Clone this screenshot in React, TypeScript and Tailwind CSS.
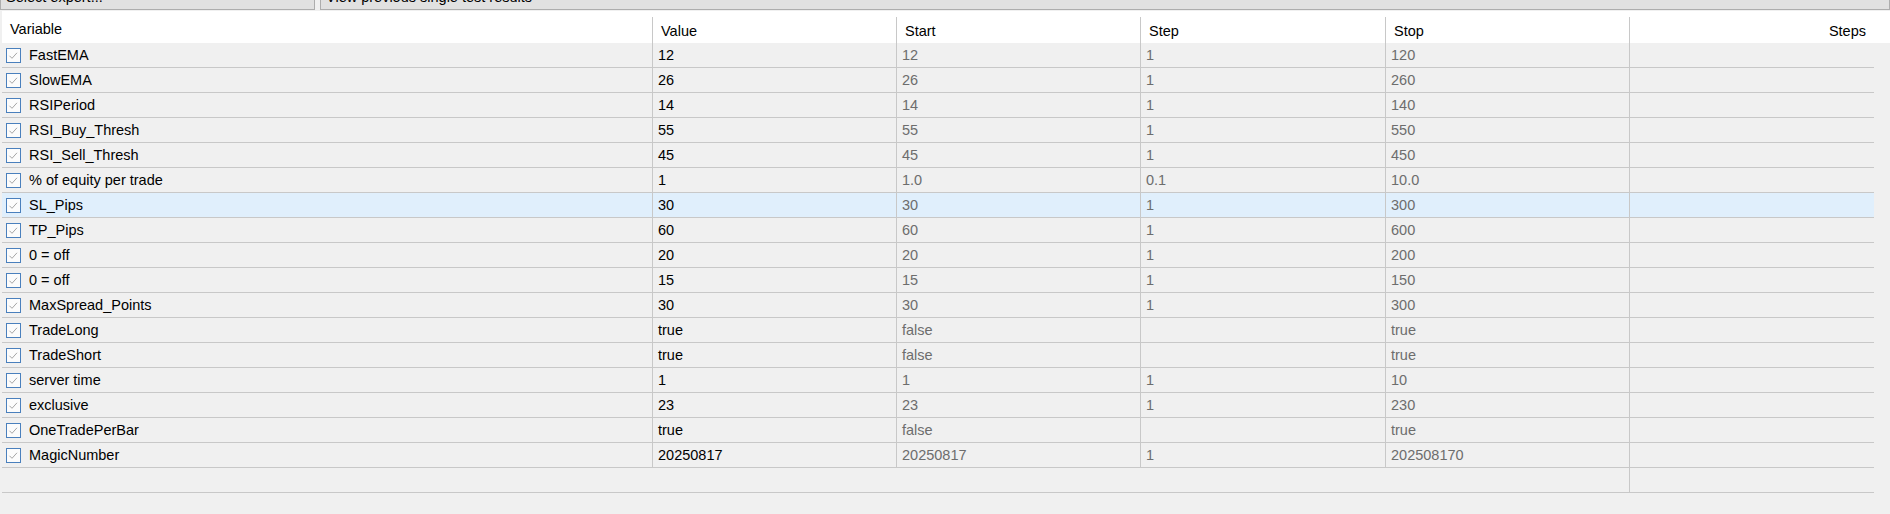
import { ChevronDown } from "lucide-react";

type InputRow = {
  readonly name: string;
  readonly value: string;
  readonly start: string;
  readonly step: string;
  readonly stop: string;
};

const inputs: ReadonlyArray<InputRow> = [
  { name: "FastEMA", value: "12", start: "12", step: "1", stop: "120" },
  { name: "SlowEMA", value: "26", start: "26", step: "1", stop: "260" },
  { name: "RSIPeriod", value: "14", start: "14", step: "1", stop: "140" },
  { name: "RSI_Buy_Thresh", value: "55", start: "55", step: "1", stop: "550" },
  { name: "RSI_Sell_Thresh", value: "45", start: "45", step: "1", stop: "450" },
  { name: "% of equity per trade", value: "1", start: "1.0", step: "0.1", stop: "10.0" },
  { name: "SL_Pips", value: "30", start: "30", step: "1", stop: "300" },
  { name: "TP_Pips", value: "60", start: "60", step: "1", stop: "600" },
  { name: "0 = off", value: "20", start: "20", step: "1", stop: "200" },
  { name: "0 = off", value: "15", start: "15", step: "1", stop: "150" },
  { name: "MaxSpread_Points", value: "30", start: "30", step: "1", stop: "300" },
  { name: "TradeLong", value: "true", start: "false", step: "", stop: "true" },
  { name: "TradeShort", value: "true", start: "false", step: "", stop: "true" },
  { name: "server time", value: "1", start: "1", step: "1", stop: "10" },
  { name: "exclusive", value: "23", start: "23", step: "1", stop: "230" },
  { name: "OneTradePerBar", value: "true", start: "false", step: "", stop: "true" },
  { name: "MagicNumber", value: "20250817", start: "20250817", step: "1", stop: "202508170" },
];

const selectedIndex = 6;

export default function App() {
  return (
    <div className="h-[514px] w-[1890px] overflow-hidden bg-[#f0f0f0] font-['Liberation_Sans',Arial,sans-serif] text-[14.5px] text-black">
      {/* combo boxes, scrolled mostly out of view */}
      <div className="flex h-[10px] items-end gap-[5px] overflow-hidden">
        <Dropdown className="w-[315px]" label="Select expert..." />
        <Dropdown className="flex-1" label="View previous single test results" />
      </div>

      <div className="ml-[2px] mt-[1px] flex h-[32px] bg-white">
        <div className="flex w-[650px] items-center pl-[8px] pt-[5px]">Variable</div>
        <HeaderCell label="Value" width="w-[244px]" />
        <HeaderCell label="Start" width="w-[244px]" />
        <HeaderCell label="Step" width="w-[245px]" />
        <HeaderCell label="Stop" width="w-[244px]" />
        <div className="flex-1 pt-[6px]">
          <div className="flex h-[26px] items-center justify-end border-l border-[#c8c8c8] pr-[24px] pt-[4px]">
            Steps
          </div>
        </div>
      </div>

      <div className="ml-[2px] w-[1872px]">
        {inputs.map((row, index) => (
          <div
            className={`flex h-[25px] border-b border-[#c8c8c8] ${index === selectedIndex ? "bg-[#e0effc]" : ""}`}
            key={`${row.name}-${index}`}
          >
            <div className="flex w-[650px] items-center gap-[8px] pl-[4px]">
              <Checkbox />
              <span className="pt-[2px]">{row.name}</span>
            </div>
            <ValueCell text={row.value} width="w-[244px]" />
            <ValueCell muted text={row.start} width="w-[244px]" />
            <ValueCell muted text={row.step} width="w-[245px]" />
            <ValueCell muted text={row.stop} width="w-[244px]" />
            <div className="flex-1 border-l border-[#c8c8c8]" />
          </div>
        ))}

        <div className="flex h-[25px] border-b border-[#c8c8c8]">
          <div className="w-[1627px]" />
          <div className="flex-1 border-l border-[#c8c8c8]" />
        </div>
      </div>
    </div>
  );
}

function Dropdown({ label, className }: { readonly label: string; readonly className: string }) {
  return (
    <div
      className={`flex h-[24px] shrink-0 items-center justify-between border border-[#adadad] bg-[#e1e1e1] pl-[5px] pr-[4px] ${className}`}
    >
      <span className="whitespace-nowrap">{label}</span>
      <ChevronDown className="h-[12px] w-[12px] text-[#606060]" strokeWidth={1.5} />
    </div>
  );
}

function HeaderCell({ label, width }: { readonly label: string; readonly width: string }) {
  return (
    <div className={`${width} pt-[6px]`}>
      <div className="flex h-[26px] items-center border-l border-[#c8c8c8] pl-[8px] pt-[4px]">{label}</div>
    </div>
  );
}

function ValueCell({
  text,
  width,
  muted = false,
}: {
  readonly text: string;
  readonly width: string;
  readonly muted?: boolean;
}) {
  return (
    <div
      className={`flex ${width} items-center border-l border-[#c8c8c8] pl-[5px] pt-[2px] ${muted ? "text-[#6d6d6d]" : ""}`}
    >
      {text}
    </div>
  );
}

function Checkbox() {
  return (
    <span className="flex h-[15px] w-[15px] shrink-0 items-center justify-center border border-[#4a80bd] bg-[#fcfcfc]">
      <svg className="h-[13px] w-[13px]" fill="none" viewBox="0 0 13 13">
        <path d="M2.5 6.8 L5 9.3 L10 3.8" stroke="#a6a6a6" strokeWidth="1" />
      </svg>
    </span>
  );
}
